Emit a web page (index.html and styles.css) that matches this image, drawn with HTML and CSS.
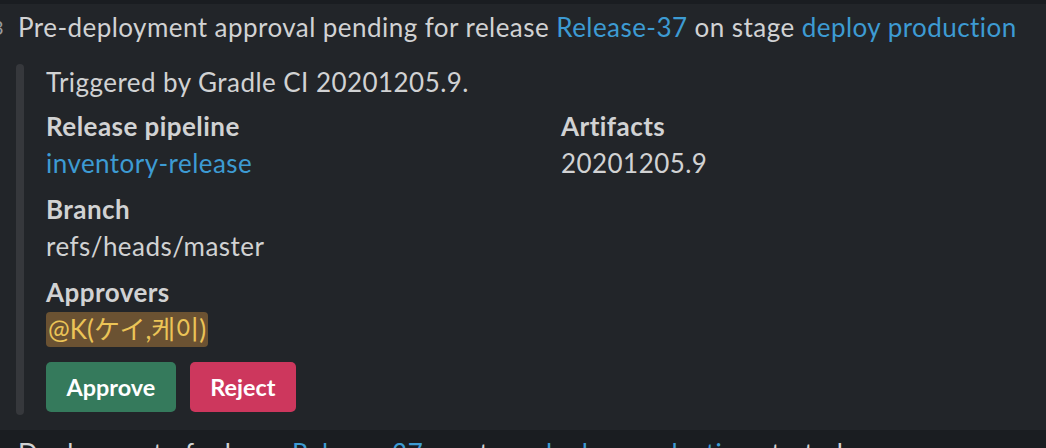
FILE: index.html
```html
<!DOCTYPE html>
<html lang="en">
<head>
<meta charset="utf-8">
<title>Pre-deployment approval</title>
<link rel="stylesheet" href="styles.css">
</head>
<body>
<div class="msg msg-active">
  <div class="line"><span class="ts">3</span><span class="text">Pre-deployment approval pending for release <a class="link" href="#">Release-37</a> on stage <a class="link" href="#">deploy production</a></span></div>
  <div class="attachment">
    <div class="bar"></div>
    <div class="att-body">
      <div class="pretext">Triggered by Gradle CI 20201205.9.</div>
      <div class="fields">
        <div class="field">
          <div class="f-title">Release pipeline</div>
          <div class="f-value"><a class="link" href="#">inventory-release</a></div>
        </div>
        <div class="field">
          <div class="f-title">Artifacts</div>
          <div class="f-value">20201205.9</div>
        </div>
        <div class="field">
          <div class="f-title">Branch</div>
          <div class="f-value">refs/heads/master</div>
        </div>
        <div class="field"></div>
        <div class="field">
          <div class="f-title">Approvers</div>
          <div class="f-value"><span class="mention">@K(ケイ,케이)</span></div>
        </div>
      </div>
      <div class="actions">
        <button class="btn btn-approve">Approve</button>
        <button class="btn btn-reject">Reject</button>
      </div>
    </div>
  </div>
</div>
<div class="msg">
  <div class="line"><span class="text">Deployment of release <a class="link" href="#">Release-37</a> on stage <a class="link" href="#">deploy production</a> started</span></div>
</div>
</body>
</html>
```

FILE: styles.css
```css
html, body {
  margin: 0;
  padding: 0;
  background: #1a1d21;
  overflow: hidden;
}
body {
  padding-top: 4px;
  font-family: Lato, "Noto Sans CJK KR", "Noto Sans CJK JP", sans-serif;
  font-size: 26px;
  letter-spacing: 0.45px;
  line-height: 37px;
  color: #d1d2d3;
}
.msg {
  padding: 5px 0 6px 0;
}
.msg-active {
  background: #222529;
  padding-bottom: 15px;
}
.line {
  display: flex;
  white-space: nowrap;
}
.ts {
  display: inline-block;
  width: 4px;
  overflow: hidden;
  direction: rtl;
  font-size: 20px;
  color: #9a9b9d;
  margin-right: 14px;
}
.msg:not(.msg-active) .line {
  padding-left: 18px;
}
.link {
  color: #3d9bd3;
  text-decoration: none;
}
.attachment {
  display: flex;
  margin-top: 18px;
  margin-left: 16px;
}
.bar {
  width: 8px;
  flex: none;
  background: #36383c;
  border-radius: 4px;
}
.att-body {
  padding-left: 22px;
  flex: 1;
}
.fields {
  display: grid;
  grid-template-columns: 515px 1fr;
  row-gap: 9px;
  margin-top: 7px;
}
.f-title {
  font-weight: 700;
}
.mention {
  background: #6b5232;
  color: #ebc457;
  border-radius: 4px;
  letter-spacing: 0;
  padding: 1px 2px 2px 2px;
}
.actions {
  display: flex;
  gap: 14px;
  margin-top: 14px;
  padding-bottom: 3px;
}
.btn {
  font-family: Lato, sans-serif;
  font-weight: 700;
  font-size: 23.4px;
  letter-spacing: 0;
  color: #ffffff;
  border: none;
  border-radius: 5px;
  height: 50px;
  padding: 0 20.5px;
  cursor: pointer;
}
.btn-approve {
  background: #357a5c;
}
.btn-reject {
  background: #cd375d;
}
```
